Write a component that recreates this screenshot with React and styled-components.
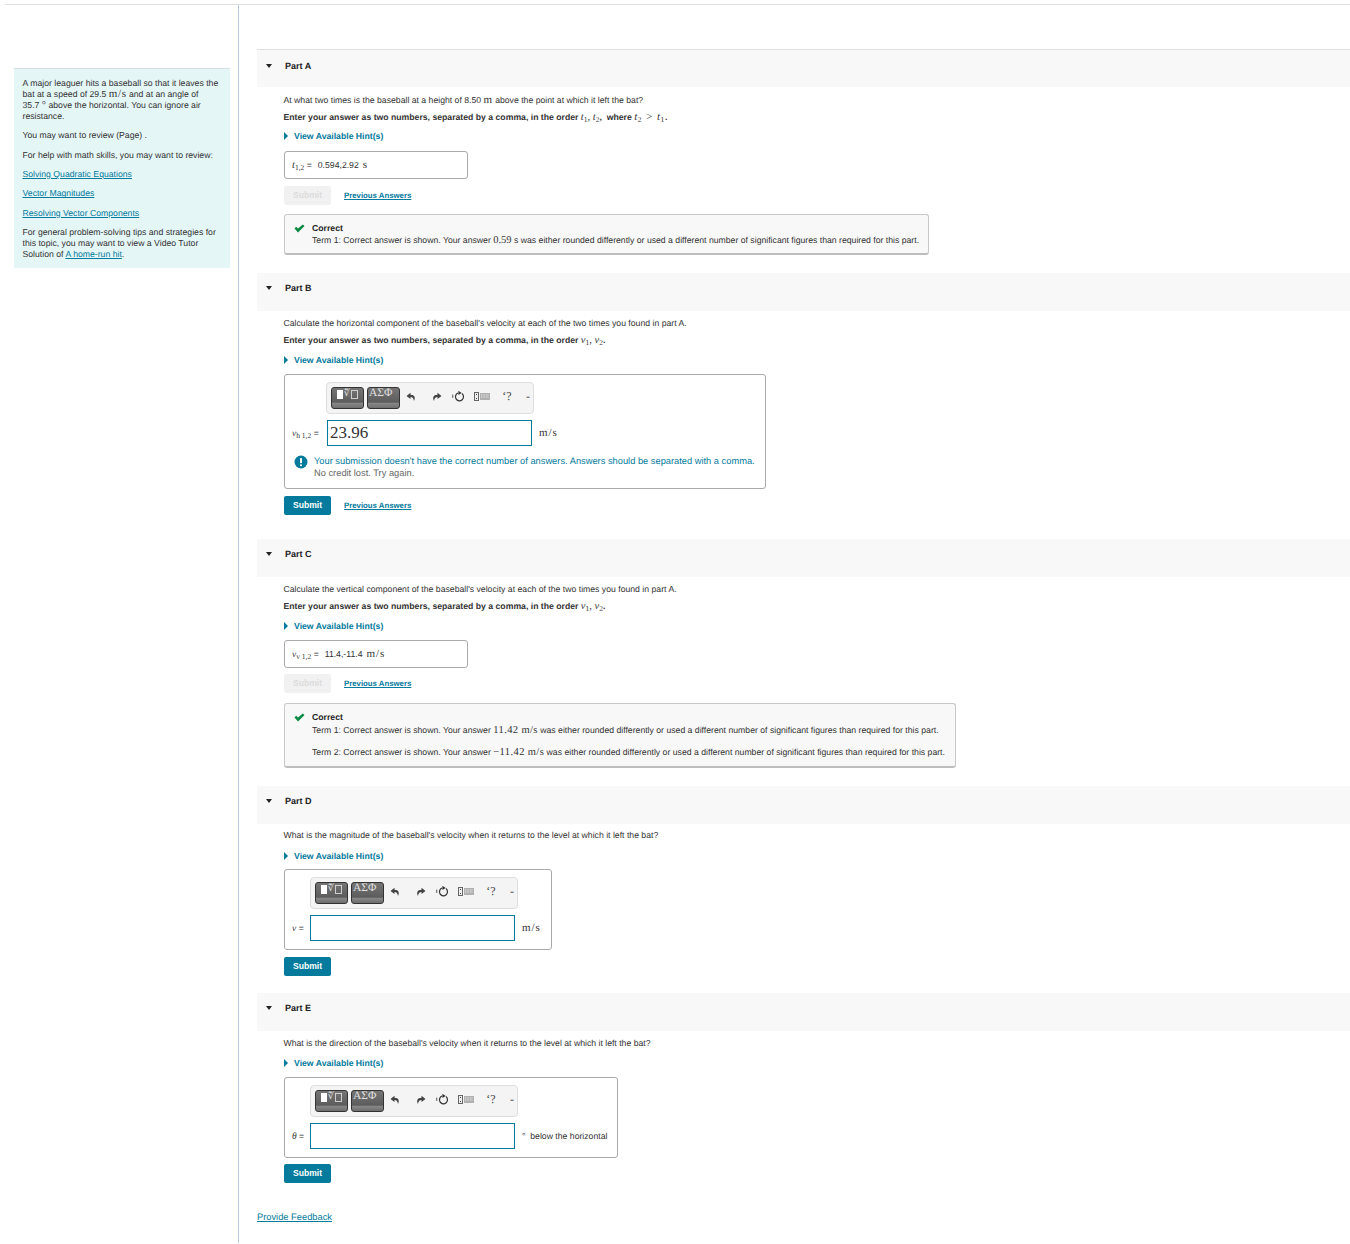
import React from 'react';
import styled, { createGlobalStyle } from 'styled-components';

const teal = '#047a9c';
const FONT_SIZE = '8.68px';

const GlobalStyle = createGlobalStyle`
  html, body {
    margin: 0;
    padding: 0;
    background: #fff;
  }
  body {
    font-family: 'Liberation Sans', Arial, Helvetica, sans-serif;
    font-size: ${FONT_SIZE};
    line-height: 11px;
    color: #333;
    text-rendering: geometricPrecision;
  }
`;

const Page = styled.div`
  width: 1345px;
  height: 1239px;
  margin-left: 5px;
  padding-top: 4px;
  overflow: hidden;
`;

const Shell = styled.div`
  display: flex;
  height: 1239px;
  border-top: 1px solid #dde1e4;
`;

const Sidebar = styled.aside`
  width: 233px;
  flex-shrink: 0;
  padding: 63px 8px 0 9px;
  box-sizing: border-box;
`;

const Intro = styled.div`
  background: #e5f6f7;
  border-top: 1px solid #d5dee2;
  padding: 9px 9px 9px 8.5px;
  height: 200px;
  box-sizing: border-box;
  p {
    margin: 0 0 8.36px;
  }
  p:last-child {
    line-height: 10.8px;
  }
`;

const Main = styled.main`
  flex: 1;
  border-left: 1px solid #b7cbdc;
  padding: 44px 0 0 18px;
`;

const Part = styled.section`
  margin-bottom: ${props => (props.$gap === undefined ? 18 : props.$gap)}px;
`;

const PartHeader = styled.div`
  height: 38px;
  box-sizing: border-box;
  display: flex;
  align-items: center;
  background: #f8f8f8;
  border-top: ${props => (props.$first ? '1px solid #dfdfdf' : 'none')};
  padding: 0 0 ${props => (props.$first ? 5 : 8)}px 9px;
  font-size: 9px;
  font-weight: bold;
  color: #222;
  gap: 13px;
`;

const Caret = styled.span`
  width: 0;
  height: 0;
  border-left: 3.5px solid transparent;
  border-right: 3.5px solid transparent;
  border-top: 4px solid #222;
`;

const PartBody = styled.div`
  padding: ${props => props.$top || 6.5}px 0 0 26.5px;
`;

const Question = styled.p`
  margin: 0 0 ${props => props.$after || 6}px;
`;

const Instruction = styled.p`
  margin: 0 0 ${props => props.$after || 9}px;
  font-weight: bold;
`;

const Hint = styled.a`
  display: flex;
  align-items: center;
  gap: 6.5px;
  color: ${teal};
  font-weight: bold;
  margin-bottom: ${props => props.$after || 8.5}px;
`;

const HintCaret = styled.span`
  width: 0;
  height: 0;
  border-top: 4px solid transparent;
  border-bottom: 4px solid transparent;
  border-left: 4.5px solid ${teal};
`;

const Math = styled.span`
  font-family: 'Liberation Serif', 'Times New Roman', serif;
  font-size: ${props => props.$size || 10.5}px;
  font-style: ${props => (props.$upright ? 'normal' : 'italic')};
  font-weight: normal;
  letter-spacing: ${props => props.$track || 0}px;
  line-height: 0;
  sub {
    font-size: 7.5px;
    font-style: normal;
    line-height: 0;
    vertical-align: -1.5px;
  }
`;

const LockedAnswer = styled.div`
  width: 184px;
  height: 28px;
  margin-left: 0.5px;
  box-sizing: border-box;
  border: 1px solid #a9a9a9;
  border-radius: 3px;
  padding-left: 7px;
  line-height: 26px;
  white-space: nowrap;
`;

const AnswerValue = styled.span`
  margin: 0 4px 0 ${props => props.$left || 4}px;
`;

const Actions = styled.div`
  display: flex;
  align-items: center;
  gap: 13px;
  margin: ${props => props.$top || 7}px 0 ${props => props.$bottom || 0}px 0.5px;
`;

const SubmitButton = styled.button`
  width: 47px;
  height: 19px;
  padding: 0 0 1px;
  border: none;
  border-radius: 2px;
  font-family: inherit;
  font-size: 8.6px;
  font-weight: bold;
  color: ${props => (props.disabled ? '#dcdcdc' : '#fff')};
  background: ${props => (props.disabled ? '#f1f1f1' : teal)};
`;

const PreviousLink = styled.a`
  color: ${teal};
  font-size: 7.8px;
  font-weight: bold;
  text-decoration: underline;
`;

const Feedback = styled.div`
  display: flex;
  width: ${props => props.$width}px;
  margin-left: 0.5px;
  box-sizing: border-box;
  background: #f8f8f8;
  border: 1px solid #c9c9c9;
  border-bottom: 2px solid #bdbdbd;
  border-radius: 3px;
  padding: 8px 8px ${props => props.$bottom}px 9px;
  gap: 7px;
`;

const FeedbackTitle = styled.div`
  font-weight: bold;
  color: #222;
  margin-bottom: ${props => props.$after}px;
`;

const FeedbackLine = styled.p`
  margin: ${props => (props.$spaced ? '11px' : '0')} 0 0;
  white-space: nowrap;
`;

const EditorBox = styled.div`
  display: inline-flex;
  flex-direction: column;
  margin-left: 0.5px;
  box-sizing: border-box;
  border: 1px solid #a9a9a9;
  border-radius: 3px;
  padding: 7px 10px 8px 7px;
  vertical-align: top;
`;

const Toolbar = styled.div`
  display: flex;
  align-items: center;
  width: 208px;
  height: 32px;
  box-sizing: border-box;
  margin-left: ${props => props.$offset}px;
  padding-left: 4px;
  background: #f4f4f4;
  border: 1px solid #dedede;
  border-radius: 4px;
`;

const PaletteButton = styled.div`
  width: 33px;
  height: 22px;
  flex-shrink: 0;
  box-sizing: border-box;
  display: flex;
  align-items: flex-start;
  justify-content: ${props => (props.$left ? 'flex-start' : 'center')};
  padding-left: ${props => (props.$left ? 1 : 0)}px;
  gap: 1px;
  border: 1px solid #333;
  border-radius: 3px;
  overflow: hidden;
  background: linear-gradient(#757575, #5c5c5c 72%, #8a8a8a 74%, #6e6e6e);
  color: #e0e0e0;
  font-family: 'Liberation Serif', serif;
  font-size: 11.5px;
  line-height: 10px;
  & + & {
    margin-left: 3px;
  }
`;

const WhiteSquare = styled.span`
  width: 6px;
  height: 9px;
  margin-top: 2px;
  background: #fff;
`;

const EmptySquare = styled.span`
  width: 7px;
  height: 9px;
  margin-top: 2px;
  box-sizing: border-box;
  border: 1px solid #cfcfcf;
`;

const RootGlyph = styled.span`
  font-size: 10px;
  line-height: 12px;
`;

const ToolSlot = styled.div`
  width: ${props => props.$w}px;
  flex-shrink: 0;
  display: flex;
  justify-content: center;
  align-items: center;
  margin-bottom: 3px;
  color: #444;
  font-family: 'Liberation Serif', serif;
  font-size: 12px;
`;

const InputRow = styled.div`
  display: flex;
  align-items: center;
  margin-top: 6px;
`;

const InputLabel = styled.div`
  width: ${props => props.$w}px;
  flex-shrink: 0;
  white-space: nowrap;
`;

const AnswerInput = styled.input`
  width: 205px;
  height: 26px;
  box-sizing: border-box;
  padding: 0 2px;
  border: 1px solid ${teal};
  border-radius: 0;
  outline: none;
  font-family: 'Liberation Serif', serif;
  font-size: 17px;
  color: #333;
`;

const Unit = styled.div`
  margin-left: 7px;
  white-space: nowrap;
`;

const Message = styled.div`
  display: flex;
  gap: 6px;
  margin: 9px 0 1px 2px;
  font-size: 9.3px;
  line-height: 12px;
  white-space: nowrap;
`;

const MessageText = styled.div`
  color: ${teal};
`;

const MessageNote = styled.div`
  color: #666;
`;

const FeedbackLink = styled.a`
  display: block;
  margin-top: 28.5px;
  color: ${teal};
  font-size: 9.3px;
  text-decoration: underline;
`;

const TextLink = styled.a`
  color: ${teal};
  text-decoration: underline;
`;

const Check = () => (
  <svg width="11" height="9" viewBox="0 0 11 9" style={{ marginTop: 1, flexShrink: 0 }}>
    <path d="M0.5 4.5 L2.2 2.8 L4 4.6 L8.8 0.4 L10.5 2 L4 8.5 Z" fill="#0b8a45" />
  </svg>
);

const AlertIcon = () => (
  <svg width="14" height="14" viewBox="0 0 14 14" style={{ flexShrink: 0 }}>
    <circle cx="7" cy="7" r="6.5" fill={teal} />
    <rect x="6" y="3" width="2" height="5.2" rx="0.8" fill="#fff" />
    <rect x="6" y="9.2" width="2" height="2" rx="0.8" fill="#fff" />
  </svg>
);

const UndoIcon = ({ flip }) => (
  <svg width="10" height="10" viewBox="0 0 10 10" style={flip ? { transform: 'scaleX(-1)' } : undefined}>
    <path d="M4.5 0.8 L0.5 4 L4.5 7 L4.5 5 C6.5 5 7.6 6.2 8 9 C9.6 6 9 2.8 4.5 2.8 Z" fill="#444" />
  </svg>
);

const ResetIcon = () => (
  <svg width="15" height="13" viewBox="0 0 15 13">
    <path d="M0.8 4.5 V8" stroke="#444" strokeWidth="1" fill="none" />
    <path d="M6.5 2.8 A4.3 4.3 0 1 0 10.6 3.4" stroke="#333" strokeWidth="1.3" fill="none" />
    <path d="M6.8 0.4 L10.4 2.8 L6.8 4.8 Z" fill="#333" />
  </svg>
);

const KeyboardIcon = () => (
  <svg width="16" height="9" viewBox="0 0 16 9">
    <rect x="0.5" y="0.5" width="4" height="8" fill="#eee" stroke="#666" />
    <rect x="2" y="2" width="1" height="1" fill="#444" />
    <rect x="2" y="6" width="1" height="1" fill="#444" />
    <rect x="6" y="1" width="10" height="7" fill="#b0b0b0" />
    <path d="M7 3 H15 M7 5 H15" stroke="#f2f2f2" strokeWidth="0.8" strokeDasharray="1 0.6" />
  </svg>
);

const EditorToolbar = ({ offset }) => (
  <Toolbar $offset={offset}>
    <PaletteButton>
      <WhiteSquare />
      <RootGlyph>∜</RootGlyph>
      <EmptySquare />
    </PaletteButton>
    <PaletteButton $left>ΑΣΦ</PaletteButton>
    <ToolSlot $w={22}><UndoIcon /></ToolSlot>
    <ToolSlot $w={30}><UndoIcon flip /></ToolSlot>
    <ToolSlot $w={14}><ResetIcon /></ToolSlot>
    <ToolSlot $w={32}><KeyboardIcon /></ToolSlot>
    <ToolSlot $w={18}>ʻ?</ToolSlot>
    <ToolSlot $w={24}>-</ToolSlot>
  </Toolbar>
);

const SolvedNote = ({ width, bottom, titleGap, children }) => (
  <Feedback $width={width} $bottom={bottom}>
    <Check />
    <div>
      <FeedbackTitle $after={titleGap}>Correct</FeedbackTitle>
      {children}
    </div>
  </Feedback>
);

const Speed = ({ children }) => <Math $upright $track={1} $size={11}>{children}</Math>;

const Vars = ({ a, b }) => (
  <Math>
    {a}<sub>1</sub>, {b}<sub>2</sub>
  </Math>
);

const PartSection = ({ name, first, gap, top, children }) => (
  <Part $gap={gap}>
    <PartHeader $first={first}>
      <Caret />
      {name}
    </PartHeader>
    <PartBody $top={top}>{children}</PartBody>
  </Part>
);

const HintLink = ({ after }) => (
  <Hint $after={after}>
    <HintCaret />
    View Available Hint(s)
  </Hint>
);

export default function App() {
  return (
    <Page>
      <GlobalStyle />
      <Shell>
        <Sidebar>
          <Intro>
            <p>
              A major leaguer hits a baseball so that it leaves the bat at a speed of 29.5{' '}
              <Math $upright $track={0.6} $size={11}>m/s</Math> and at an angle of 35.7&nbsp;<Math $upright>°</Math> above the
              horizontal. You can ignore air resistance.
            </p>
            <p>You may want to review (Page) .</p>
            <p>For help with math skills, you may want to review:</p>
            <p><TextLink>Solving Quadratic Equations</TextLink></p>
            <p><TextLink>Vector Magnitudes</TextLink></p>
            <p><TextLink>Resolving Vector Components</TextLink></p>
            <p>
              For general problem-solving tips and strategies for this topic, you may want to view a
              Video Tutor Solution of <TextLink>A home-run hit</TextLink>.
            </p>
          </Intro>
        </Sidebar>
        <Main>
          <PartSection name="Part A" first top={7.5}>
            <Question>
              At what two times is the baseball at a height of 8.50 <Math $upright $track={0.6} $size={11}>m</Math> above the
              point at which it left the bat?
            </Question>
            <Instruction $after={8}>
              Enter your answer as two numbers, separated by a comma, in the order <Vars a="t" b="t" />,
              {' '}&nbsp;where <Math $size={11} $track={0.6}>t<sub>2</sub>&nbsp;&gt;&nbsp;t<sub>1</sub></Math>.
            </Instruction>
            <HintLink after={9.5} />
            <LockedAnswer>
              <Math>t<sub>1,2</sub></Math>&nbsp;=
              <AnswerValue $left={6}>0.594,2.92</AnswerValue>
              <Speed>s</Speed>
            </LockedAnswer>
            <Actions $bottom={9}>
              <SubmitButton disabled>Submit</SubmitButton>
              <PreviousLink>Previous Answers</PreviousLink>
            </Actions>
            <SolvedNote width={645} bottom={7} titleGap={1}>
              <FeedbackLine>
                Term 1: Correct answer is shown. Your answer <Math $upright>0.59</Math> s was either
                rounded differently or used a different number of significant figures than required for
                this part.
              </FeedbackLine>
            </SolvedNote>
          </PartSection>

          <PartSection name="Part B" gap={24}>
            <Question>
              Calculate the horizontal component of the baseball's velocity at each of the two times you
              found in part A.
            </Question>
            <Instruction>
              Enter your answer as two numbers, separated by a comma, in the order <Vars a="v" b="v" />.
            </Instruction>
            <HintLink />
            <EditorBox>
              <EditorToolbar offset={34} />
              <InputRow>
                <InputLabel $w={35}><Math $size={9.5}>v<sub>h 1,2</sub></Math>&nbsp;=</InputLabel>
                <AnswerInput defaultValue="23.96" />
                <Unit><Speed>m/s</Speed></Unit>
              </InputRow>
              <Message>
                <AlertIcon />
                <div>
                  <MessageText>
                    Your submission doesn't have the correct number of answers. Answers should be
                    separated with a comma.
                  </MessageText>
                  <MessageNote>No credit lost. Try again.</MessageNote>
                </div>
              </Message>
            </EditorBox>
            <Actions>
              <SubmitButton>Submit</SubmitButton>
              <PreviousLink>Previous Answers</PreviousLink>
            </Actions>
          </PartSection>

          <PartSection name="Part C">
            <Question>
              Calculate the vertical component of the baseball's velocity at each of the two times you
              found in part A.
            </Question>
            <Instruction>
              Enter your answer as two numbers, separated by a comma, in the order <Vars a="v" b="v" />.
            </Instruction>
            <HintLink />
            <LockedAnswer>
              <Math $size={9.5}>v<sub>v 1,2</sub></Math>&nbsp;=
              <AnswerValue $left={6}>11.4,-11.4</AnswerValue>
              <Speed>m/s</Speed>
            </LockedAnswer>
            <Actions $top={6} $bottom={10}>
              <SubmitButton disabled>Submit</SubmitButton>
              <PreviousLink>Previous Answers</PreviousLink>
            </Actions>
            <SolvedNote width={672} bottom={8.5} titleGap={1.5}>
              <FeedbackLine>
                Term 1: Correct answer is shown. Your answer <Math $upright $track={0.4}>11.42 m/s</Math> was either
                rounded differently or used a different number of significant figures than required for
                this part.
              </FeedbackLine>
              <FeedbackLine $spaced>
                Term 2: Correct answer is shown. Your answer <Math $upright $track={0.4}>−11.42 m/s</Math> was either
                rounded differently or used a different number of significant figures than required for
                this part.
              </FeedbackLine>
            </SolvedNote>
          </PartSection>

          <PartSection name="Part D" gap={17} top={5.5}>
            <Question $after={10}>
              What is the magnitude of the baseball's velocity when it returns to the level at which it
              left the bat?
            </Question>
            <HintLink after={7.5} />
            <EditorBox>
              <EditorToolbar offset={18} />
              <InputRow>
                <InputLabel $w={18}><Math $size={9.5}>v</Math>&nbsp;=</InputLabel>
                <AnswerInput />
                <Unit><Speed>m/s</Speed></Unit>
              </InputRow>
            </EditorBox>
            <Actions>
              <SubmitButton>Submit</SubmitButton>
            </Actions>
          </PartSection>

          <PartSection name="Part E" gap={0}>
            <Question $after={9}>
              What is the direction of the baseball's velocity when it returns to the level at which it
              left the bat?
            </Question>
            <HintLink />
            <EditorBox>
              <EditorToolbar offset={18} />
              <InputRow>
                <InputLabel $w={18}><Math $size={9.5}>θ</Math>&nbsp;=</InputLabel>
                <AnswerInput />
                <Unit>° &nbsp;below the horizontal</Unit>
              </InputRow>
            </EditorBox>
            <Actions $top={6}>
              <SubmitButton>Submit</SubmitButton>
            </Actions>
          </PartSection>

          <FeedbackLink>Provide Feedback</FeedbackLink>
        </Main>
      </Shell>
    </Page>
  );
}
